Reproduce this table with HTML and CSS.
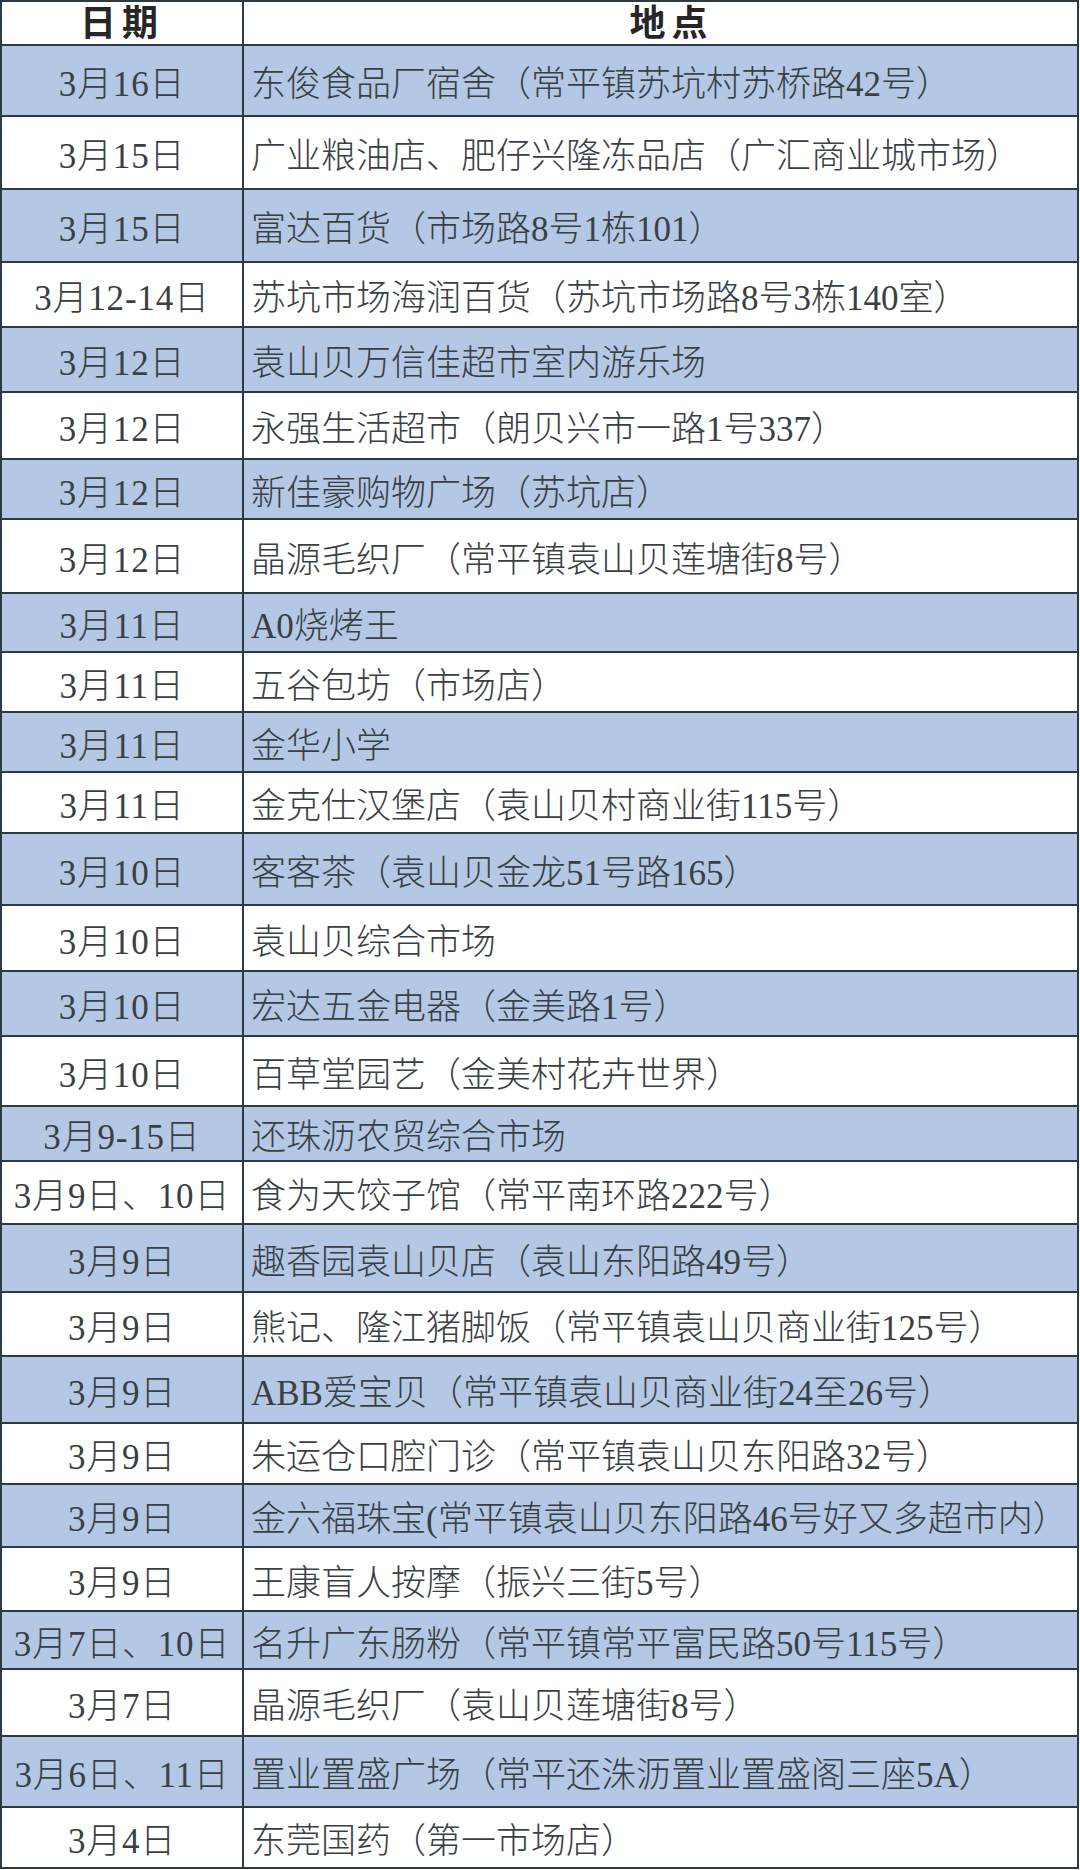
FILE: index.html
```html
<!DOCTYPE html>
<html lang="zh-CN">
<head>
<meta charset="utf-8">
<title>日期 地点</title>
<link rel="stylesheet" href="styles.css">
</head>
<body>
<div class="sheet">
  <div class="row head"><div class="date">日期</div><div class="place">地点</div></div>
  <div class="row alt"><div class="date">3月16日</div><div class="place">东俊食品厂宿舍（常平镇苏坑村苏桥路42号）</div></div>
  <div class="row"><div class="date">3月15日</div><div class="place">广业粮油店、肥仔兴隆冻品店（广汇商业城市场）</div></div>
  <div class="row alt"><div class="date">3月15日</div><div class="place">富达百货（市场路8号1栋101）</div></div>
  <div class="row"><div class="date">3月12-14日</div><div class="place">苏坑市场海润百货（苏坑市场路8号3栋140室）</div></div>
  <div class="row alt"><div class="date">3月12日</div><div class="place">袁山贝万信佳超市室内游乐场</div></div>
  <div class="row"><div class="date">3月12日</div><div class="place">永强生活超市（朗贝兴市一路1号337）</div></div>
  <div class="row alt"><div class="date">3月12日</div><div class="place">新佳豪购物广场（苏坑店）</div></div>
  <div class="row"><div class="date">3月12日</div><div class="place">晶源毛织厂（常平镇袁山贝莲塘街8号）</div></div>
  <div class="row alt"><div class="date">3月11日</div><div class="place">A0烧烤王</div></div>
  <div class="row"><div class="date">3月11日</div><div class="place">五谷包坊（市场店）</div></div>
  <div class="row alt"><div class="date">3月11日</div><div class="place">金华小学</div></div>
  <div class="row"><div class="date">3月11日</div><div class="place">金克仕汉堡店（袁山贝村商业街115号）</div></div>
  <div class="row alt"><div class="date">3月10日</div><div class="place">客客茶（袁山贝金龙51号路165）</div></div>
  <div class="row"><div class="date">3月10日</div><div class="place">袁山贝综合市场</div></div>
  <div class="row alt"><div class="date">3月10日</div><div class="place">宏达五金电器（金美路1号）</div></div>
  <div class="row"><div class="date">3月10日</div><div class="place">百草堂园艺（金美村花卉世界）</div></div>
  <div class="row alt"><div class="date">3月9-15日</div><div class="place">还珠沥农贸综合市场</div></div>
  <div class="row"><div class="date">3月9日、10日</div><div class="place">食为天饺子馆（常平南环路222号）</div></div>
  <div class="row alt"><div class="date">3月9日</div><div class="place">趣香园袁山贝店（袁山东阳路49号）</div></div>
  <div class="row"><div class="date">3月9日</div><div class="place">熊记、隆江猪脚饭（常平镇袁山贝商业街125号）</div></div>
  <div class="row alt"><div class="date">3月9日</div><div class="place">ABB爱宝贝（常平镇袁山贝商业街24至26号）</div></div>
  <div class="row"><div class="date">3月9日</div><div class="place">朱运仓口腔门诊（常平镇袁山贝东阳路32号）</div></div>
  <div class="row alt"><div class="date">3月9日</div><div class="place">金六福珠宝(常平镇袁山贝东阳路46号好又多超市内）</div></div>
  <div class="row"><div class="date">3月9日</div><div class="place">王康盲人按摩（振兴三街5号）</div></div>
  <div class="row alt"><div class="date">3月7日、10日</div><div class="place">名升广东肠粉（常平镇常平富民路50号115号）</div></div>
  <div class="row"><div class="date">3月7日</div><div class="place">晶源毛织厂（袁山贝莲塘街8号）</div></div>
  <div class="row alt"><div class="date">3月6日、11日</div><div class="place">置业置盛广场（常平还洙沥置业置盛阁三座5A）</div></div>
  <div class="row last"><div class="date">3月4日</div><div class="place">东莞国药（第一市场店）</div></div>
</div>
</body>
</html>
```
FILE: styles.css
```css
html, body {
  margin: 0;
  padding: 0;
  background: #ffffff;
}

.sheet {
  width: 1079px;
  box-sizing: border-box;
  border: 2px solid #2c3a44;
  display: grid;
  grid-template-rows: 44px 71px 73px 73px 65px 65px 67px 60px 74px 59px 60px 60px 61px 72px 66px 65px 70px 55px 63px 68px 64px 67px 61px 63px 64px 58px 67px 71px 59px;
  font-family: "Liberation Serif", "Noto Sans CJK SC", serif;
  font-size: 35px;
  font-weight: 300;
  color: #394044;
}

.row {
  display: grid;
  grid-template-columns: 242px 1fr;
  box-sizing: border-box;
  border-bottom: 2px solid #2c3a44;
  background: #ffffff;
}

.row.last {
  border-bottom: none;
}

.row.alt {
  background: #b4c7e4;
}

.date {
  display: flex;
  align-items: center;
  justify-content: center;
  border-right: 2px solid #2c3a44;
  white-space: nowrap;
  letter-spacing: 0.8px;
}

.place {
  display: flex;
  align-items: center;
  padding-left: 7px;
  white-space: nowrap;
}

.head .date,
.head .place {
  font-size: 36px;
  font-weight: 700;
  color: #262626;
  letter-spacing: 6px;
  align-items: flex-start;
  line-height: 44px;
}

.head .place {
  justify-content: center;
  padding-left: 22px;
}
```
